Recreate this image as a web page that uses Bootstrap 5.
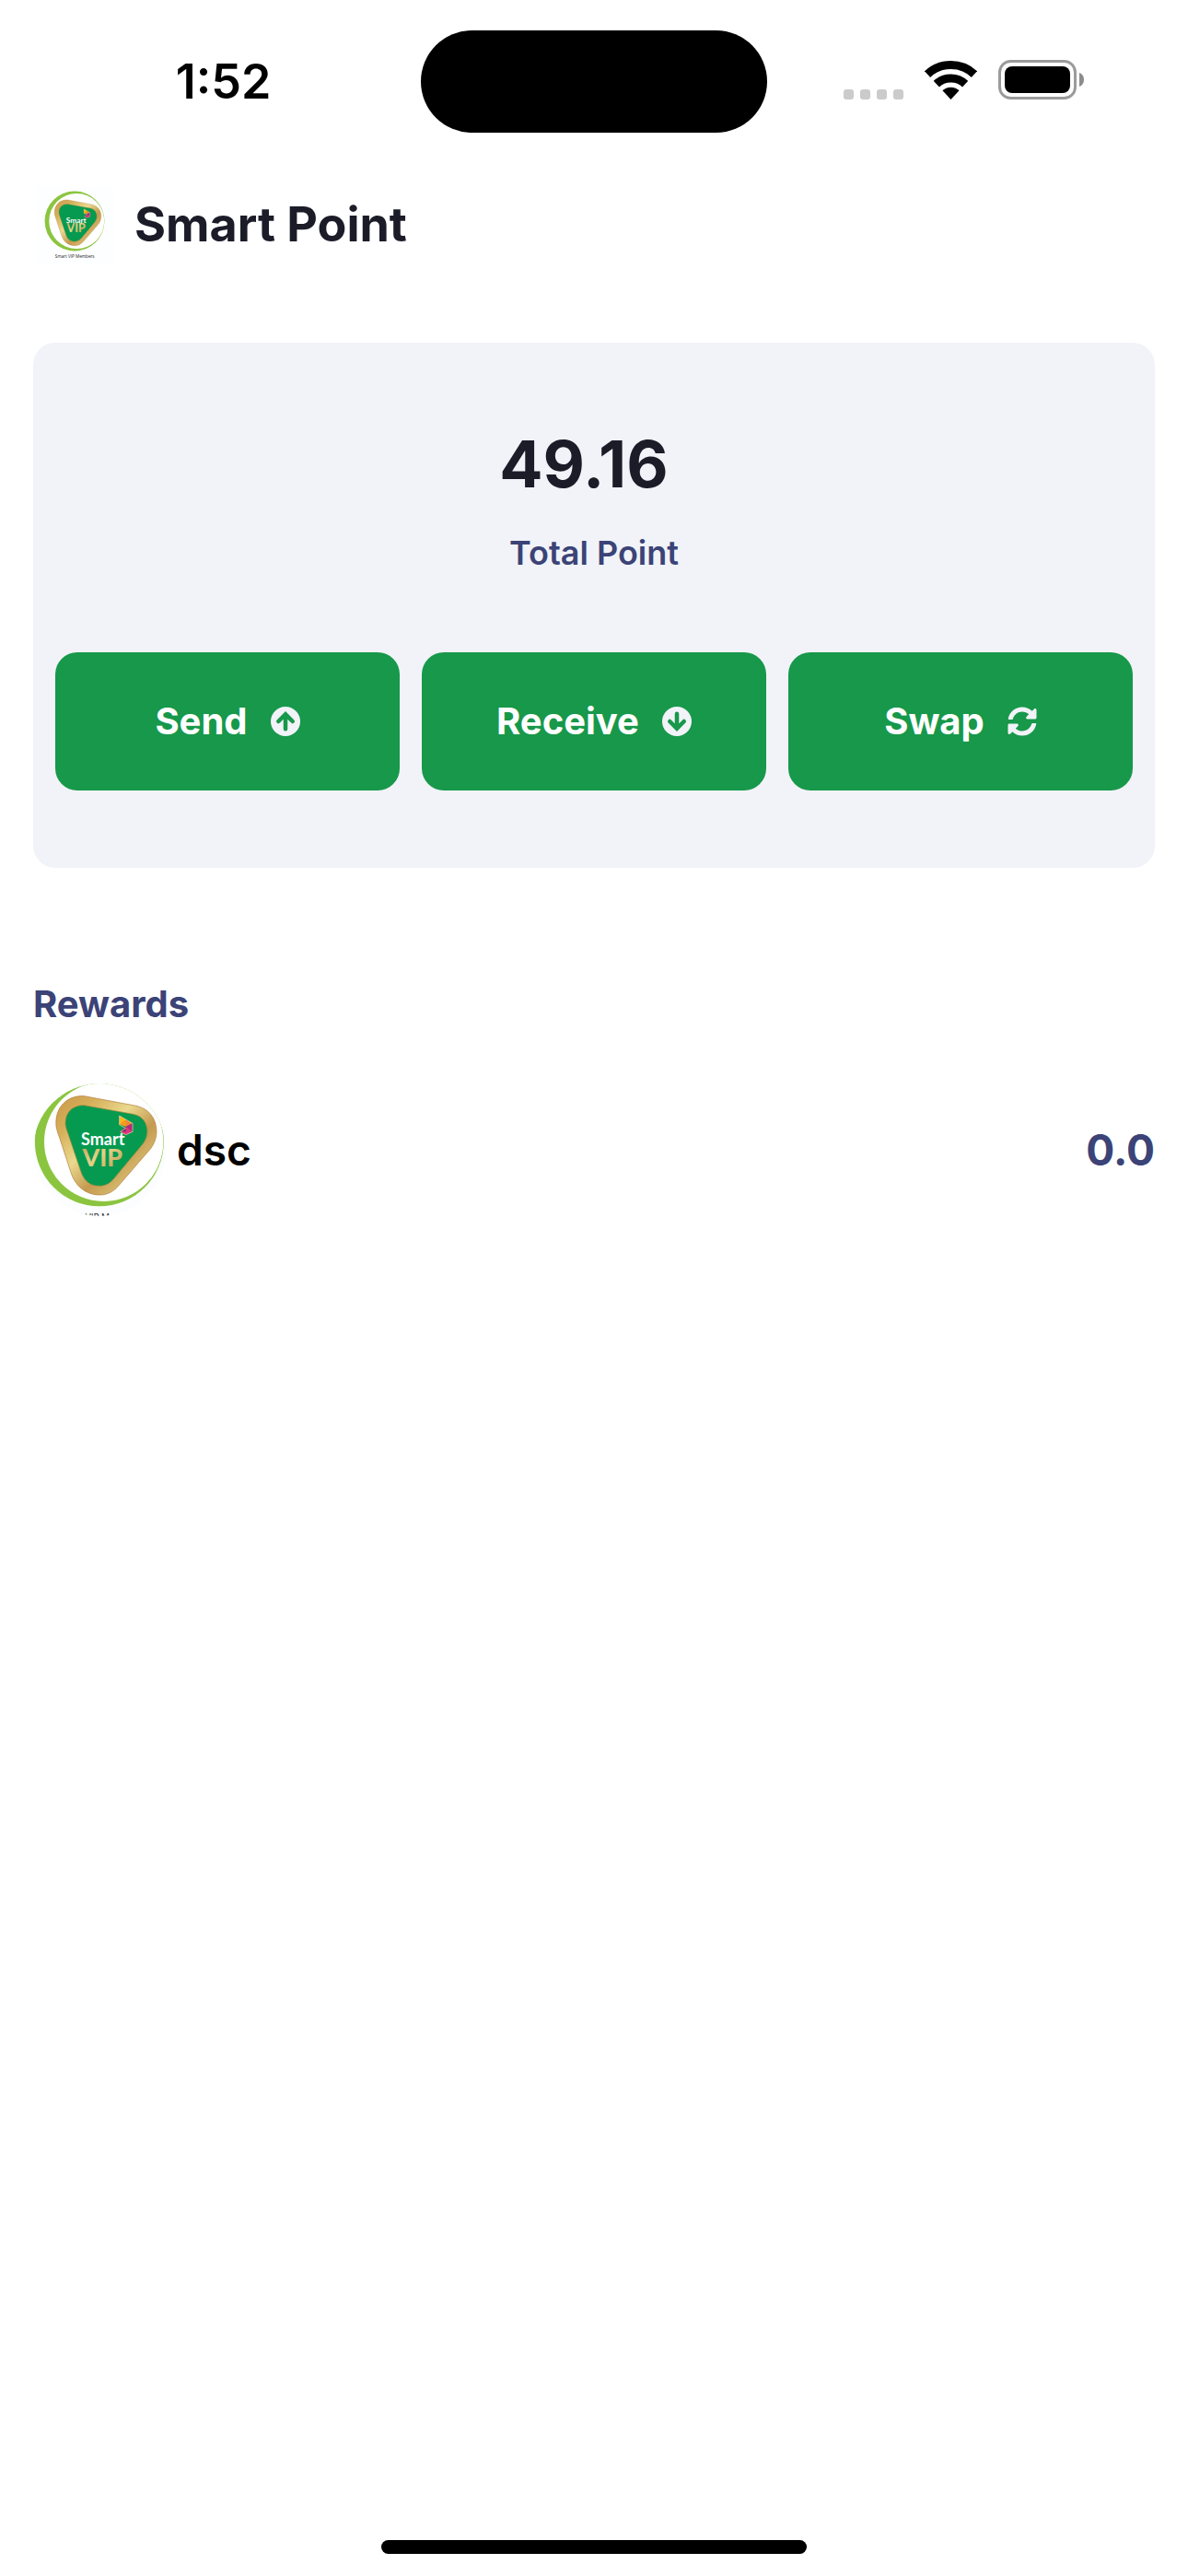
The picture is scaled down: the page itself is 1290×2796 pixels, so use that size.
<!DOCTYPE html>
<html lang="en">
<head>
<meta charset="utf-8">
<meta name="viewport" content="width=device-width, initial-scale=1">
<title>Smart Point</title>
<link href="https://cdn.jsdelivr.net/npm/bootstrap@5.3.0/dist/css/bootstrap.min.css" rel="stylesheet">
<style>
  body { font-family: Inter, "Liberation Sans", sans-serif; font-weight: 600; color: #1b1c28; background: #fff; }
  svg { display: block; flex: none; }
  .status-bar { padding-top: 33px; grid-template-columns: minmax(0, 1fr) auto minmax(0, 1fr); }
  .status-side { color: #000; }
  .clock { font-size: 52px; line-height: 60px; padding-left: 28px; }
  .island { width: 376px; height: 111px; background: #000; }
  .indicators { gap: 23px; padding-right: 113px; padding-bottom: 4px; }
  .app-header { padding: 58px 40px 0; gap: 22px; }
  .app-title { font-size: 52px; line-height: 84px; font-weight: 700; }
  .app-main { padding: 86px 36px 0; }
  .balance { background: #f1f3f8; border: 0; border-radius: 24px; padding: 84px 24px; }
  .amount { font-size: 70px; line-height: 96px; font-weight: 700; padding-right: 22px; }
  .caption-text { font-size: 36px; line-height: 48px; color: #3b4377; margin-top: 24px; }
  .actions { gap: 24px; margin-top: 84px; }
  .btn-action { --bs-btn-color: #fff; --bs-btn-bg: #17984a; --bs-btn-border-color: #17984a; --bs-btn-hover-color: #fff; --bs-btn-hover-bg: #12803e; --bs-btn-active-color: #fff; --bs-btn-active-bg: #12803e;
    --bs-btn-border-radius: 24px; --bs-btn-padding-x: 0; --bs-btn-padding-y: 0; --bs-btn-border-width: 0; --bs-btn-font-weight: 700;
    flex: 1 1 0; height: 150px; font-size: 40px; gap: 25px; }
  .section-title { font-size: 40px; line-height: 48px; font-weight: 700; color: #3b4377; margin-top: 124px; }
  .reward { padding: 62px 0 0; border: 0; background: none; color: #000; }
  .reward-name { font-size: 46px; font-weight: 600; padding-left: 12px; }
  .reward-value { font-size: 46px; font-weight: 700; color: #3b4377; }
  .home-bar { width: 462px; height: 15px; background: #000; margin-bottom: 24px; }
</style>
<script src="https://cdn.jsdelivr.net/npm/bootstrap@5.3.0/dist/js/bootstrap.bundle.min.js" defer></script>
</head>
<body class="d-flex flex-column min-vh-100">

<!-- Shared artwork: the Smart VIP badge -->
<svg width="0" height="0" class="position-absolute" aria-hidden="true">
  <defs>
    <linearGradient id="gold" x1="0" y1="0" x2="1" y2="1">
      <stop offset="0" stop-color="#c9994a"/><stop offset=".2" stop-color="#d6ae58"/><stop offset=".42" stop-color="#e9d98e"/>
      <stop offset=".62" stop-color="#c49a50"/><stop offset=".8" stop-color="#d8bd70"/><stop offset="1" stop-color="#a8743a"/>
    </linearGradient>
    <linearGradient id="goldText" x1="0" y1="0" x2="1" y2="1">
      <stop offset="0" stop-color="#c69f50"/><stop offset=".45" stop-color="#e4d288"/><stop offset="1" stop-color="#bd9347"/>
    </linearGradient>
    <symbol id="badgeArt" viewBox="-2 -8 544 544" overflow="visible">
      <circle cx="263.5" cy="238" r="210" fill="#8bc540"/>
      <circle cx="278" cy="238" r="194" fill="#fff"/>
      <path d="M215 89 C160 85 117 125 123 188 C126 205 131 215 135 228 L170 335 C184 382 220 411 265 411 C292 411 311 399 328 379 L430 261 C443 244 450 225 450 203 C449 160 424 130 384 121 Z" fill="url(#gold)" stroke="#b27b3c" stroke-width="2"/>
      <path d="M215 119 C176 117 151 143 153 181 C154 190 157 200 160 207 L202 331 C212 364 232 382 263 382 C284 382 299 373 312 357 L402 249 C414 234 420 221 420 203 C419 174 403 154 374 148 Z" fill="#059a50" stroke="#b98b42" stroke-width="2"/>
      <path d="M329 153 L350 166 V188 L329 181 Z" fill="#fdb71a"/>
      <path d="M350 166 L372 178 L350 188 Z" fill="#f58634"/>
      <path d="M329 181 L350 166 L350 188 Z" fill="#f79a1f"/>
      <path d="M350 188 L372 178 V205 Z" fill="#b5287c"/>
      <path d="M350 188 L372 205 L350 215 L332 205 Z" fill="#e2337f"/>
      <path d="M332 205 L350 188 L350 205 Z" fill="#7d2b6b"/>
      <path d="M329 153 L372 178 V205 L350 215 L332 205 L350 194 L329 183 Z" fill="none" stroke="#f3d9b0" stroke-width="2"/>
      <text x="275" y="250" text-anchor="middle" font-family="Lato, sans-serif" font-weight="700" font-size="54" fill="#fff">Smart</text>
      <text x="274" y="317" text-anchor="middle" font-family="Lato, sans-serif" font-weight="900" font-size="80" fill="url(#goldText)">VIP</text>
      <text x="265" y="495" text-anchor="middle" font-family="'Open Sans', sans-serif" font-weight="400" font-size="30" fill="#222">Smart VIP Members</text>
    </symbol>
  </defs>
</svg>

<div class="status-bar d-grid align-items-center">
  <div class="status-side clock text-center">1:52</div>
  <div class="island rounded-pill"></div>
  <div class="status-side indicators d-flex align-items-center justify-content-end">
    <svg width="65" height="42" viewBox="0 0 65 42" fill="#cbcbcb" aria-hidden="true">
      <rect x="0" y="31" width="11" height="11" rx="3"/><rect x="18" y="31" width="11" height="11" rx="3"/>
      <rect x="36" y="31" width="11" height="11" rx="3"/><rect x="54" y="31" width="11" height="11" rx="3"/>
    </svg>
    <svg width="57" height="42" viewBox="0 0 57 42" aria-hidden="true">
      <clipPath id="fan"><path d="M28.5 42 L-10.5 0 H67.5 Z"/></clipPath>
      <g clip-path="url(#fan)" fill="none" stroke="#000">
        <circle cx="28.5" cy="42" r="37.5" stroke-width="9"/>
        <circle cx="28.5" cy="42" r="23" stroke-width="9"/>
        <circle cx="28.5" cy="42" r="13.3" fill="#000" stroke="none"/>
      </g>
    </svg>
    <svg width="93" height="43" viewBox="0 0 93 43" aria-hidden="true">
      <rect x="1.5" y="1.5" width="82" height="40" rx="12" fill="none" stroke="#9b9b9b" stroke-width="3"/>
      <rect x="7" y="7" width="71" height="29" rx="8" fill="#000"/>
      <path d="M88 14 C91 15 93 18 93 21.500 C93 25 91 28 88 29 Z" fill="#8c8c8c"/>
    </svg>
  </div>
</div>

<header class="app-header d-flex align-items-center">
  <svg width="84" height="84" role="img" aria-label="Smart VIP logo"><rect width="84" height="84" fill="#fdfeff"/><use href="#badgeArt" width="84" height="84"/></svg>
  <h1 class="app-title m-0">Smart Point</h1>
</header>

<main class="app-main flex-grow-1">
  <section class="card balance text-center">
    <div class="amount">49.16</div>
    <div class="caption-text">Total Point</div>
    <div class="actions d-flex">
      <button type="button" class="btn btn-action d-flex align-items-center justify-content-center">Send
        <svg width="32" height="32" viewBox="0 0 31 31" aria-hidden="true"><circle cx="15.5" cy="15.5" r="15.5" fill="#f1f3f8"/><path d="M15.500 23.500 V8.500 M8 15.500 L15.500 8 L23 15.500" fill="none" stroke="#17984a" stroke-width="4.400" stroke-linecap="round"/></svg>
      </button>
      <button type="button" class="btn btn-action d-flex align-items-center justify-content-center">Receive
        <svg width="32" height="32" viewBox="0 0 31 31" aria-hidden="true"><circle cx="15.5" cy="15.5" r="15.5" fill="#f1f3f8"/><path d="M15.500 7.500 V22.500 M8 15.500 L15.500 23 L23 15.500" fill="none" stroke="#17984a" stroke-width="4.400" stroke-linecap="round"/></svg>
      </button>
      <button type="button" class="btn btn-action d-flex align-items-center justify-content-center">Swap
        <svg width="32" height="32" viewBox="0 0 512 512" fill="#f1f3f8" aria-hidden="true"><path d="M370.720 133.280C339.458 104.008 298.888 87.962 255.848 88c-77.458.068-144.328 53.178-162.791 126.850-1.344 5.363-6.122 9.150-11.651 9.150H24.103c-7.498 0-13.194-6.807-11.807-14.176C33.933 94.924 134.813 8 256 8c66.448 0 126.791 26.136 171.315 68.685L463.030 40.970C478.149 25.851 504 36.559 504 57.941V192c0 13.255-10.745 24-24 24H345.941c-21.382 0-32.090-25.851-16.971-40.971l41.750-41.749zM32 296h134.059c21.382 0 32.090 25.851 16.971 40.971l-41.750 41.750c31.262 29.273 71.835 45.319 114.876 45.280 77.418-.070 144.315-53.144 162.787-126.849 1.344-5.363 6.122-9.150 11.651-9.150h57.304c7.498 0 13.194 6.807 11.807 14.176C478.067 417.076 377.187 504 256 504c-66.448 0-126.791-26.136-171.315-68.685L48.970 471.030C33.851 486.149 8 475.441 8 454.059V320c0-13.255 10.745-24 24-24z"/></svg>
      </button>
    </div>
  </section>

  <h2 class="section-title mb-0">Rewards</h2>
  <ul class="list-group list-group-flush">
    <li class="list-group-item reward d-flex align-items-center">
      <svg class="rounded-circle" width="144" height="144" viewBox="48 48 432 432" role="img" aria-label="Smart VIP logo"><rect x="48" y="48" width="432" height="432" fill="#fcfdff"/><use href="#badgeArt" x="-2" y="-8" width="544" height="544"/></svg>
      <span class="reward-name flex-grow-1">dsc</span>
      <span class="reward-value">0.0</span>
    </li>
  </ul>
</main>

<div class="home-bar rounded-pill mx-auto"></div>
</body>
</html>
